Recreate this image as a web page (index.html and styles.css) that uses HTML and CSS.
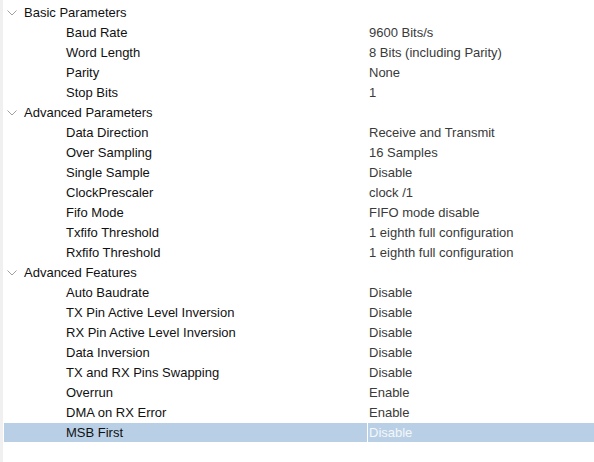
FILE: index.html
```html
<!DOCTYPE html>
<html>
<head>
<meta charset="utf-8">
<link rel="stylesheet" href="styles.css">
</head>
<body>
<div class="tree">
  <div class="row group"><span class="chev"><svg width="10" height="6" viewBox="0 0 10 6"><path d="M0.5 0.5 L5 5 L9.5 0.5" fill="none" stroke="#a0a0a0" stroke-width="1"/></svg></span><span class="glabel">Basic Parameters</span></div>
  <div class="row"><span class="label">Baud Rate</span><span class="value">9600 Bits/s</span></div>
  <div class="row"><span class="label">Word Length</span><span class="value">8 Bits (including Parity)</span></div>
  <div class="row"><span class="label">Parity</span><span class="value">None</span></div>
  <div class="row"><span class="label">Stop Bits</span><span class="value">1</span></div>
  <div class="row group"><span class="chev"><svg width="10" height="6" viewBox="0 0 10 6"><path d="M0.5 0.5 L5 5 L9.5 0.5" fill="none" stroke="#a0a0a0" stroke-width="1"/></svg></span><span class="glabel">Advanced Parameters</span></div>
  <div class="row"><span class="label">Data Direction</span><span class="value">Receive and Transmit</span></div>
  <div class="row"><span class="label">Over Sampling</span><span class="value">16 Samples</span></div>
  <div class="row"><span class="label">Single Sample</span><span class="value">Disable</span></div>
  <div class="row"><span class="label">ClockPrescaler</span><span class="value">clock /1</span></div>
  <div class="row"><span class="label">Fifo Mode</span><span class="value">FIFO mode disable</span></div>
  <div class="row"><span class="label">Txfifo Threshold</span><span class="value">1 eighth full configuration</span></div>
  <div class="row"><span class="label">Rxfifo Threshold</span><span class="value">1 eighth full configuration</span></div>
  <div class="row group"><span class="chev"><svg width="10" height="6" viewBox="0 0 10 6"><path d="M0.5 0.5 L5 5 L9.5 0.5" fill="none" stroke="#a0a0a0" stroke-width="1"/></svg></span><span class="glabel">Advanced Features</span></div>
  <div class="row"><span class="label">Auto Baudrate</span><span class="value">Disable</span></div>
  <div class="row"><span class="label">TX Pin Active Level Inversion</span><span class="value">Disable</span></div>
  <div class="row"><span class="label">RX Pin Active Level Inversion</span><span class="value">Disable</span></div>
  <div class="row"><span class="label">Data Inversion</span><span class="value">Disable</span></div>
  <div class="row"><span class="label">TX and RX Pins Swapping</span><span class="value">Disable</span></div>
  <div class="row"><span class="label">Overrun</span><span class="value">Enable</span></div>
  <div class="row"><span class="label">DMA on RX Error</span><span class="value">Enable</span></div>
  <div class="row selected"><span class="label">MSB First</span><span class="value">Disable</span></div>
</div>
</body>
</html>
```
FILE: styles.css
```css
html, body {
  margin: 0;
  padding: 0;
  background: #ffffff;
  height: 100%;
}
body {
  border-left: 3px solid #f0f0f0;
  box-sizing: border-box;
  font-family: "Liberation Sans", Arial, sans-serif;
  font-size: 13px;
  color: #000;
}
.tree {
  padding-top: 3px;
  padding-left: 1px;
  display: flex;
  flex-direction: column;
}
.row {
  display: flex;
  align-items: center;
  height: 19px;
  margin-bottom: 1px;
  white-space: nowrap;
}
.chev {
  width: 20px;
  display: flex;
  justify-content: flex-start;
  padding-left: 3px;
  box-sizing: border-box;
  margin-top: 1px;
}
.chev svg { display: block; }
.glabel {
  color: #111;
}
.label {
  width: 363px;
  padding-left: 62px;
  box-sizing: border-box;
  color: #111;
  align-self: stretch;
  display: flex;
  align-items: center;
}
.value {
  flex: 1;
  padding-left: 1px;
  border-left: 1px solid transparent;
  color: #3a3a3a;
  align-self: stretch;
  display: flex;
  align-items: center;
}
.selected {
  background: #b9cfe5;
}
.selected .value {
  border-left-color: #ffffff;
  color: #f4f7fb;
}
```
